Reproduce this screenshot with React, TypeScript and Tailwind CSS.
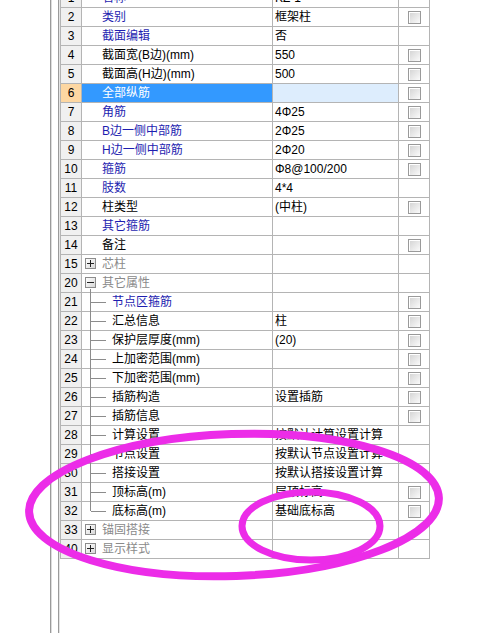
import React from "react";

type Row = {
  n: string;
  label: string;
  value?: string;
  tone?: "blue" | "black" | "gray";
  check?: boolean;
  selected?: boolean;
  kind?: "plus" | "minus" | "child" | "lastChild";
};

const rows: Row[] = [
  { n: "1", label: "名称", value: "KZ-1", tone: "blue" },
  { n: "2", label: "类别", value: "框架柱", tone: "blue", check: true },
  { n: "3", label: "截面编辑", value: "否", tone: "blue" },
  { n: "4", label: "截面宽(B边)(mm)", value: "550", tone: "black", check: true },
  { n: "5", label: "截面高(H边)(mm)", value: "500", tone: "black", check: true },
  { n: "6", label: "全部纵筋", value: "", tone: "blue", check: true, selected: true },
  { n: "7", label: "角筋", value: "4Φ25", tone: "blue", check: true },
  { n: "8", label: "B边一侧中部筋", value: "2Φ25", tone: "blue", check: true },
  { n: "9", label: "H边一侧中部筋", value: "2Φ20", tone: "blue", check: true },
  { n: "10", label: "箍筋", value: "Φ8@100/200", tone: "blue", check: true },
  { n: "11", label: "肢数", value: "4*4", tone: "blue" },
  { n: "12", label: "柱类型", value: "(中柱)", tone: "black", check: true },
  { n: "13", label: "其它箍筋", tone: "blue" },
  { n: "14", label: "备注", tone: "black", check: true },
  { n: "15", label: "芯柱", tone: "gray", kind: "plus" },
  { n: "20", label: "其它属性", tone: "gray", kind: "minus" },
  { n: "21", label: "节点区箍筋", tone: "blue", check: true, kind: "child" },
  { n: "22", label: "汇总信息", value: "柱", tone: "black", check: true, kind: "child" },
  { n: "23", label: "保护层厚度(mm)", value: "(20)", tone: "black", check: true, kind: "child" },
  { n: "24", label: "上加密范围(mm)", tone: "black", check: true, kind: "child" },
  { n: "25", label: "下加密范围(mm)", tone: "black", check: true, kind: "child" },
  { n: "26", label: "插筋构造", value: "设置插筋", tone: "black", check: true, kind: "child" },
  { n: "27", label: "插筋信息", tone: "black", check: true, kind: "child" },
  { n: "28", label: "计算设置", value: "按默认计算设置计算", tone: "black", kind: "child" },
  { n: "29", label: "节点设置", value: "按默认节点设置计算", tone: "black", kind: "child" },
  { n: "30", label: "搭接设置", value: "按默认搭接设置计算", tone: "black", kind: "child" },
  { n: "31", label: "顶标高(m)", value: "层顶标高", tone: "black", check: true, kind: "child" },
  { n: "32", label: "底标高(m)", value: "基础底标高", tone: "black", check: true, kind: "lastChild" },
  { n: "33", label: "锚固搭接", tone: "gray", kind: "plus" },
  { n: "40", label: "显示样式", tone: "gray", kind: "plus" },
];

const toneClass = {
  blue: "text-[#1e1eb0]",
  black: "text-black",
  gray: "text-[#8a8a8a]",
};

const Checkbox = () => (
  <span className="block h-[13px] w-[13px] border border-[#9a9a9a] bg-linear-to-br from-[#d2d2d2] to-[#fbfbfb] shadow-[inset_1px_1px_0_#ffffff]" />
);

const ToggleBox = ({ open }: { open: boolean }) => (
  <span className="absolute left-[3px] top-[3px] flex h-[11px] w-[11px] items-center justify-center border border-[#8c8c8c] bg-linear-to-br from-white to-[#d8d8d8]">
    <span className="absolute h-[1px] w-[7px] bg-[#222]" />
    {!open && <span className="absolute h-[7px] w-[1px] bg-[#222]" />}
  </span>
);

const NameCell = ({ row }: { row: Row }) => {
  const isChild = row.kind === "child" || row.kind === "lastChild";
  const isGroup = row.kind === "plus" || row.kind === "minus";
  return (
    <div
      className={`relative flex w-[191px] shrink-0 items-center border-r border-[#b4b4b4] ${
        row.selected ? "bg-[#3399ff] text-white" : toneClass[row.tone ?? "black"]
      } ${isChild ? "pl-[30px]" : "pl-[20px]"}`}
    >
      {isGroup && <ToggleBox open={row.kind === "minus"} />}
      {row.kind === "minus" && (
        <span className="absolute left-[8px] top-[15px] bottom-[-1px] w-[1px] bg-[#8c8c8c]" />
      )}
      {row.kind === "child" && (
        <span className="absolute left-[8px] top-[-1px] bottom-[-1px] w-[1px] bg-[#8c8c8c]" />
      )}
      {row.kind === "lastChild" && (
        <span className="absolute left-[8px] top-[-1px] h-[10px] w-[1px] bg-[#8c8c8c]" />
      )}
      {isChild && <span className="absolute left-[9px] top-[9px] h-[1px] w-[15px] bg-[#8c8c8c]" />}
      <span className="whitespace-nowrap">{row.label}</span>
    </div>
  );
};

const PropertyRow = ({ row }: { row: Row }) => (
  <div className="flex h-[19px] border-b border-[#b4b4b4]">
    <div
      className={`flex w-[21px] shrink-0 items-center justify-center border-r border-[#b4b4b4] text-black ${
        row.selected ? "bg-[#fdd7a2]" : "bg-[#f0f0f0]"
      }`}
    >
      {row.n}
    </div>
    <NameCell row={row} />
    <div
      className={`flex w-[126px] shrink-0 items-center whitespace-nowrap border-r border-[#b4b4b4] pl-[2px] text-black ${
        row.selected ? "bg-[#ddedfd]" : ""
      }`}
    >
      {row.value}
    </div>
    <div className="flex w-[31px] shrink-0 items-center justify-center border-r border-[#b4b4b4]">
      {row.check && <Checkbox />}
    </div>
  </div>
);

export default function App() {
  return (
    <div className="relative h-[633px] w-[494px] overflow-hidden bg-white font-['Liberation_Sans','Noto_Sans_CJK_SC',sans-serif] text-[12px] leading-none">
      <div className="flex h-full">
        <div className="w-[50px] shrink-0" />
        <div className="flex w-[10px] shrink-0">
          <div className="w-[1px] bg-[#9a9a9a]" />
          <div className="w-[1px] bg-[#dcdcdc]" />
          <div className="w-[6px]" />
          <div className="w-[1px] bg-[#9a9a9a]" />
          <div className="w-[1px] bg-[#e4e4e4]" />
        </div>
        <div className="-mt-[11px] self-start border-l border-[#b4b4b4]">
          {rows.map((row) => (
            <PropertyRow key={row.n} row={row} />
          ))}
        </div>
      </div>

      <svg
        className="pointer-events-none absolute left-0 top-0"
        width="494"
        height="633"
        viewBox="0 0 494 633"
      >
        <ellipse
          cx="234"
          cy="505"
          rx="205"
          ry="71"
          transform="rotate(-2 234 505)"
          fill="none"
          stroke="#ec2ce8"
          strokeWidth="8"
        />
        <ellipse cx="311" cy="526" rx="69" ry="34" fill="none" stroke="#ec2ce8" strokeWidth="7" />
      </svg>
    </div>
  );
}
